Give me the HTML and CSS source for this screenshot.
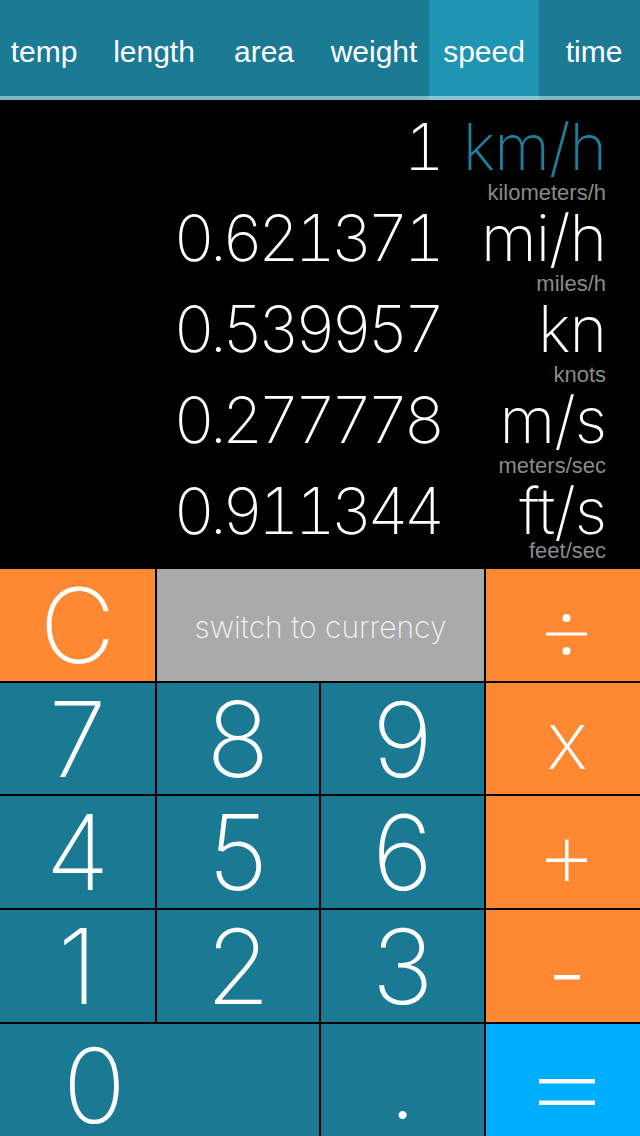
FILE: index.html
```html
<!DOCTYPE html>
<html lang="en">

<head>
    <meta charset="UTF-8">
    <meta name="viewport" content="width=device-width, initial-scale=1.0">
    <title>Unit converter - speed</title>
    <link rel="stylesheet" href="styles.css">
</head>

<body>
    <div class="tabs">
        <div class="tab-strip">
            <div class="tab">temp</div>
            <div class="tab">length</div>
            <div class="tab">area</div>
            <div class="tab">weight</div>
            <div class="tab active">speed</div>
            <div class="tab">time</div>
        </div>
    </div>

    <div class="display">
        <div class="row">
            <div class="value">1</div>
            <div class="unit">
                <div class="unit-name base">km/h</div>
                <div class="unit-desc">kilometers/h</div>
            </div>
        </div>
        <div class="row">
            <div class="value">0.621371</div>
            <div class="unit">
                <div class="unit-name">mi/h</div>
                <div class="unit-desc">miles/h</div>
            </div>
        </div>
        <div class="row">
            <div class="value">0.539957</div>
            <div class="unit">
                <div class="unit-name">kn</div>
                <div class="unit-desc">knots</div>
            </div>
        </div>
        <div class="row">
            <div class="value">0.277778</div>
            <div class="unit">
                <div class="unit-name">m/s</div>
                <div class="unit-desc">meters/sec</div>
            </div>
        </div>
        <div class="row last">
            <div class="value">0.911344</div>
            <div class="unit">
                <div class="unit-name">ft/s</div>
                <div class="unit-desc">feet/sec</div>
            </div>
        </div>
    </div>

    <div class="keypad">
        <div class="key clear">C</div>
        <div class="key switch">switch to currency</div>
        <div class="key op" aria-label="÷">
            <svg width="154" height="112" viewBox="0 0 154 112">
                <circle cx="80.5" cy="49" r="4" fill="#fff" />
                <rect x="60" y="63.5" width="41" height="3" fill="#fff" />
                <circle cx="80.5" cy="82" r="4" fill="#fff" />
            </svg>
        </div>

        <div class="key">7</div>
        <div class="key">8</div>
        <div class="key">9</div>
        <div class="key op times">x</div>

        <div class="key">4</div>
        <div class="key">5</div>
        <div class="key">6</div>
        <div class="key op" aria-label="+">
            <svg width="154" height="112" viewBox="0 0 154 112">
                <rect x="60" y="62.5" width="41" height="3.5" fill="#fff" />
                <rect x="79" y="43.5" width="3.5" height="41.5" fill="#fff" />
            </svg>
        </div>

        <div class="key">1</div>
        <div class="key">2</div>
        <div class="key">3</div>
        <div class="key op" aria-label="-">
            <svg width="154" height="112" viewBox="0 0 154 112">
                <rect x="68" y="65" width="26" height="4.5" fill="#fff" />
            </svg>
        </div>

        <div class="key zero">0</div>
        <div class="key">.</div>
        <div class="key equals" aria-label="=">
            <svg width="154" height="112" viewBox="0 0 154 112">
                <rect x="53" y="55" width="56" height="4.5" fill="#fff" />
                <rect x="53" y="76.5" width="56" height="4.5" fill="#fff" />
            </svg>
        </div>
    </div>
</body>

</html>
```

FILE: styles.css
```css
body {
    margin: 0;
    width: 640px;
    height: 1136px;
    overflow: hidden;
    background-color: #000;
    font-family: "Inter", "Liberation Sans", sans-serif;
    color: #fff;
}

/* tab bar */
.tabs {
    height: 100px;
    overflow: hidden;
    background-color: #1b7a94;
}

.tab-strip {
    display: flex;
    margin-left: -11px;
}

.tab {
    flex: 0 0 110px;
    height: 100px;
    box-sizing: border-box;
    padding-top: 8px;
    line-height: 88px;
    text-align: center;
    font-family: "Liberation Sans", sans-serif;
    font-size: 30px;
    border-bottom: 4px solid #7eb7c7;
}

.tab.active {
    background-color: #1f95b3;
    border-bottom-color: #88c7d9;
}

/* converted values */
.display {
    height: 468px;
    box-sizing: border-box;
    padding-top: 14px;
}

.row {
    display: flex;
    height: 91px;
}

.value {
    flex: 1;
    text-align: right;
    font-size: 64px;
    font-weight: 150;
    line-height: 66px;
    font-variant-numeric: tabular-nums;
    letter-spacing: -5px;
}

.unit {
    width: 200px;
    box-sizing: border-box;
    padding-right: 34px;
    text-align: right;
}

.unit-name {
    font-size: 64px;
    font-weight: 150;
    line-height: 66px;
    letter-spacing: -1px;
}

.unit-name.base {
    color: #1f7f9b;
}

.unit-desc {
    font-family: "Liberation Sans", sans-serif;
    font-size: 22px;
    line-height: 25px;
    color: #8a8a8a;
}

.row.last .unit-desc {
    margin-top: -6px;
}

/* keypad */
.keypad {
    display: grid;
    grid-template-columns: 155px 162px 163px 154px;
    grid-template-rows: repeat(5, 1fr);
    gap: 2px;
    height: 567px;
    margin-top: 1px;
}

.key {
    display: flex;
    align-items: center;
    justify-content: center;
    background-color: #1a7a94;
    font-size: 104px;
    font-weight: 170;
    line-height: 100px;
}

.key.clear,
.key.op {
    background-color: #ff8833;
}

.key.switch {
    grid-column: span 2;
    background-color: #aaaaaa;
    color: #f4f4f4;
    font-size: 30px;
    font-weight: 200;
    line-height: 40px;
    padding-top: 4px;
}

.key.times {
    font-size: 80px;
    font-weight: 200;
    line-height: 90px;
    padding-left: 8px;
    padding-top: 3px;
}

.key.zero {
    grid-column: span 2;
    justify-content: flex-start;
    padding-left: 63px;
    padding-top: 10px;
}

.key.equals {
    background-color: #00aeff;
}
```
